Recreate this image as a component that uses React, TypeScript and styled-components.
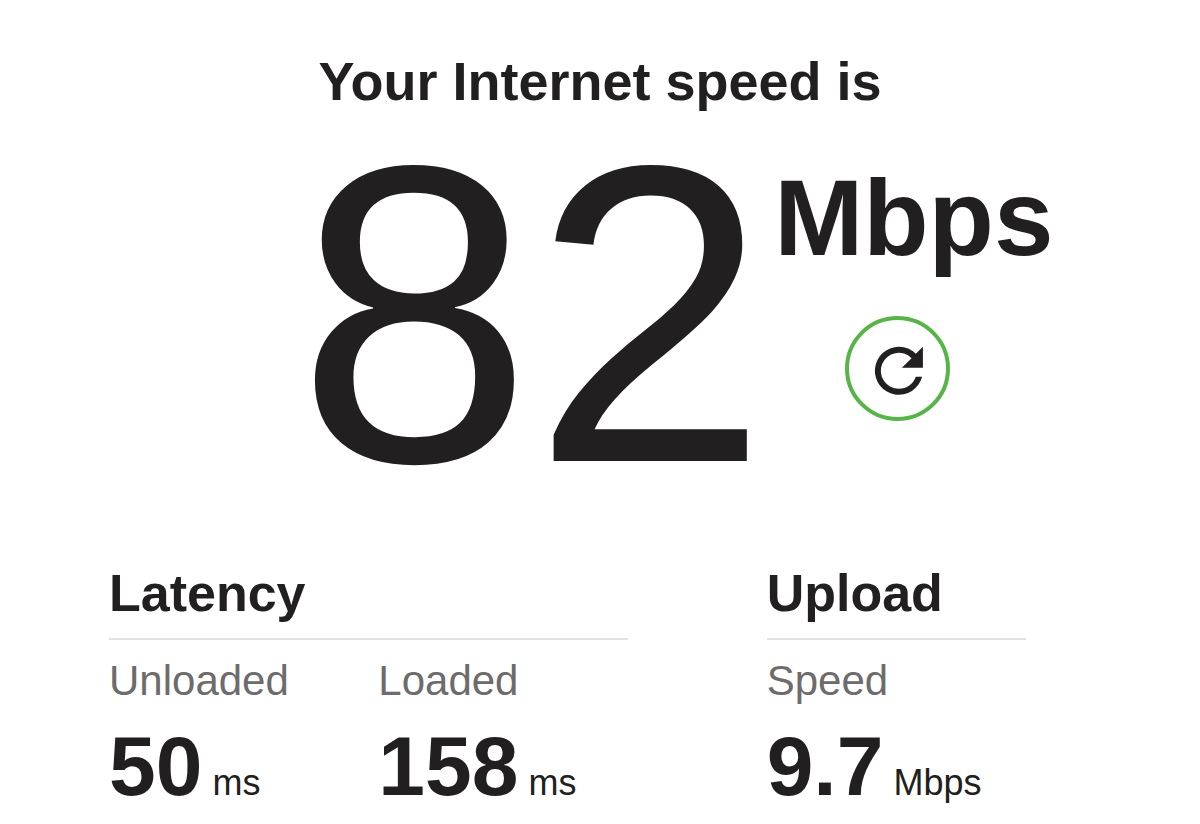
import React from "react";
import styled, { createGlobalStyle } from "styled-components";

const GlobalStyle = createGlobalStyle`
  * {
    box-sizing: border-box;
  }
  body {
    margin: 0;
    background: #ffffff;
    color: #221f20;
    font-family: "Liberation Sans", Arial, Helvetica, sans-serif;
  }
`;

const Page = styled.main`
  padding: 51px 0 16px;
`;

const Title = styled.h1`
  margin: 0;
  font-size: 54px;
  line-height: 60px;
  font-weight: 700;
  text-align: center;
`;

const Reading = styled.section`
  display: flex;
  justify-content: center;
  gap: 6px;
  margin-top: 54px;
  padding-left: 150px;
`;

const SpeedValue = styled.div`
  font-size: 424px;
  line-height: 298px;
`;

const ReadingSide = styled.div`
  display: flex;
  flex-direction: column;
  align-items: flex-start;
  gap: 45px;
`;

const SpeedUnit = styled.div`
  font-size: 107px;
  line-height: 106px;
  font-weight: 700;
`;

const RefreshButton = styled.button`
  display: flex;
  align-items: center;
  justify-content: center;
  width: 105px;
  height: 105px;
  margin-left: 71px;
  padding: 0;
  border: 4px solid #57b548;
  border-radius: 50%;
  background: #ffffff;
  color: #221f20;
  cursor: pointer;
`;

const Details = styled.div`
  display: grid;
  grid-template-columns: 2fr 1fr;
  gap: 139px;
  margin-top: 100px;
  padding: 0 174px 0 109px;
`;

const GroupTitle = styled.h2`
  margin: 0;
  padding-bottom: 15px;
  border-bottom: 2px solid #e2e2e2;
  font-size: 52px;
  line-height: 60px;
  font-weight: 700;
`;

const Stats = styled.dl<{ $columns: number }>`
  display: grid;
  grid-template-columns: repeat(${({ $columns }) => $columns}, 1fr);
  gap: 20px;
  margin: 17px 0 0;
`;

const StatLabel = styled.dt`
  color: #6d6b6b;
  font-size: 42px;
  line-height: 48px;
`;

const StatValue = styled.dd`
  display: flex;
  align-items: baseline;
  gap: 10px;
  margin: 19px 0 0;
  font-size: 84px;
  line-height: 84px;
  font-weight: 700;
`;

const StatUnit = styled.span`
  font-size: 36px;
  font-weight: 400;
`;

type StatData = { label: string; value: string; unit: string };

const groups: { title: string; stats: StatData[] }[] = [
  {
    title: "Latency",
    stats: [
      { label: "Unloaded", value: "50", unit: "ms" },
      { label: "Loaded", value: "158", unit: "ms" },
    ],
  },
  {
    title: "Upload",
    stats: [{ label: "Speed", value: "9.7", unit: "Mbps" }],
  },
];

function RefreshIcon() {
  return (
    <svg width="72" height="72" viewBox="-0.3 -0.6 24 24" fill="currentColor" aria-hidden="true">
      <path d="M17.65 6.35A7.958 7.958 0 0 0 12 4a8 8 0 1 0 7.73 10h-2.08A5.99 5.99 0 0 1 12 18a6 6 0 1 1 4.22-10.22L13 11h7V4z" />
    </svg>
  );
}

export default function App() {
  return (
    <>
      <GlobalStyle />
      <Page>
        <Title>Your Internet speed is</Title>
        <Reading>
          <SpeedValue>82</SpeedValue>
          <ReadingSide>
            <SpeedUnit>Mbps</SpeedUnit>
            <RefreshButton type="button" aria-label="Run the test again">
              <RefreshIcon />
            </RefreshButton>
          </ReadingSide>
        </Reading>
        <Details>
          {groups.map((group) => (
            <section key={group.title}>
              <GroupTitle>{group.title}</GroupTitle>
              <Stats $columns={group.stats.length}>
                {group.stats.map((stat) => (
                  <div key={stat.label}>
                    <StatLabel>{stat.label}</StatLabel>
                    <StatValue>
                      {stat.value}
                      <StatUnit>{stat.unit}</StatUnit>
                    </StatValue>
                  </div>
                ))}
              </Stats>
            </section>
          ))}
        </Details>
      </Page>
    </>
  );
}
